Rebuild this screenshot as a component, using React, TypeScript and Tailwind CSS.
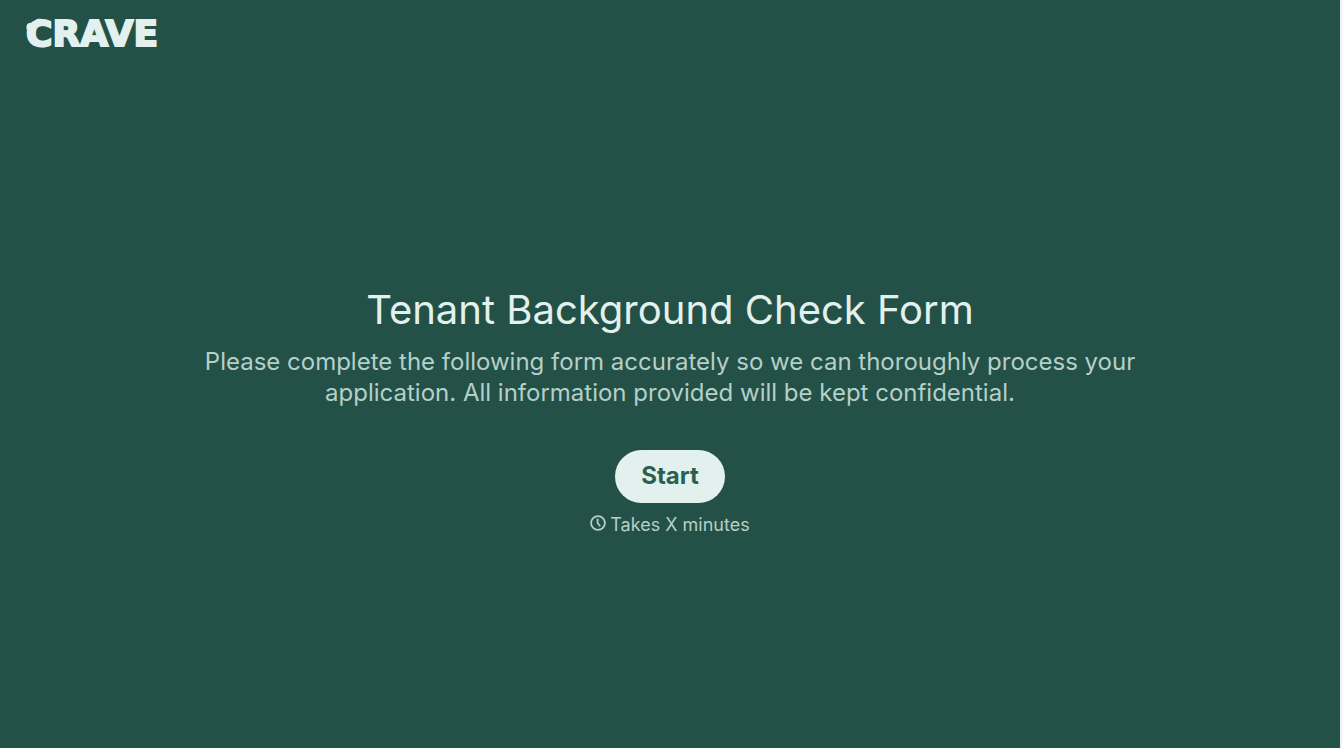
const Logo = () => {
  return (
    <a
      href="#"
      aria-label="CRAVE"
      className="relative block font-['DejaVu_Sans',sans-serif] text-4xl leading-9 font-bold text-[#e3f1ee] [-webkit-text-stroke:2px_#e3f1ee]"
    >
      CRAVE
      <svg
        viewBox="0 0 20 14"
        fill="currentColor"
        aria-hidden="true"
        className="absolute top-0.5 left-0 h-3.5 w-5"
      >
        <path d="M.5 11C0 6 2 4.500 5.500 5 7.500 5.500 8 4 9 2.500 11 0 15 .2 18 2L15 6 8 9 4 13Z" />
      </svg>
    </a>
  )
}

const ClockIcon = () => {
  return (
    <svg
      viewBox="0 0 16 16"
      fill="none"
      stroke="currentColor"
      strokeWidth="1.8"
      aria-hidden="true"
      className="size-4"
    >
      <circle cx="8" cy="8" r="6.9" />
      <path d="M7.6 3.8V8l2.6 3.2" />
    </svg>
  )
}

const App = () => {
  return (
    <div className="flex min-h-screen flex-col border-r-2 border-[#eef2f5] bg-[#235147] font-['Inter',sans-serif]">
      <header className="flex h-17 items-center px-[26px]">
        <Logo />
      </header>

      <main className="flex flex-1 flex-col items-center justify-center px-6 pt-1 text-center">
        <h1 className="text-[40px] leading-12 text-[#e3f1ee]">
          Tenant Background Check Form
        </h1>
        <p className="mt-3 max-w-[944px] text-2xl leading-[31px] text-[#b5cfc9]">
          Please complete the following form accurately so we can thoroughly
          process your application. All information provided will be kept
          confidential.
        </p>
        <button
          type="button"
          className="mt-[42px] h-[53px] rounded-full bg-[#e3f1ee] px-[26px] text-2xl font-bold text-[#2b5f53]"
        >
          Start
        </button>
        <div className="mt-3 flex items-start gap-1 text-lg leading-5 text-[#b5cfc9]">
          <ClockIcon />
          <span>Takes X minutes</span>
        </div>
      </main>
    </div>
  )
}
export default App
